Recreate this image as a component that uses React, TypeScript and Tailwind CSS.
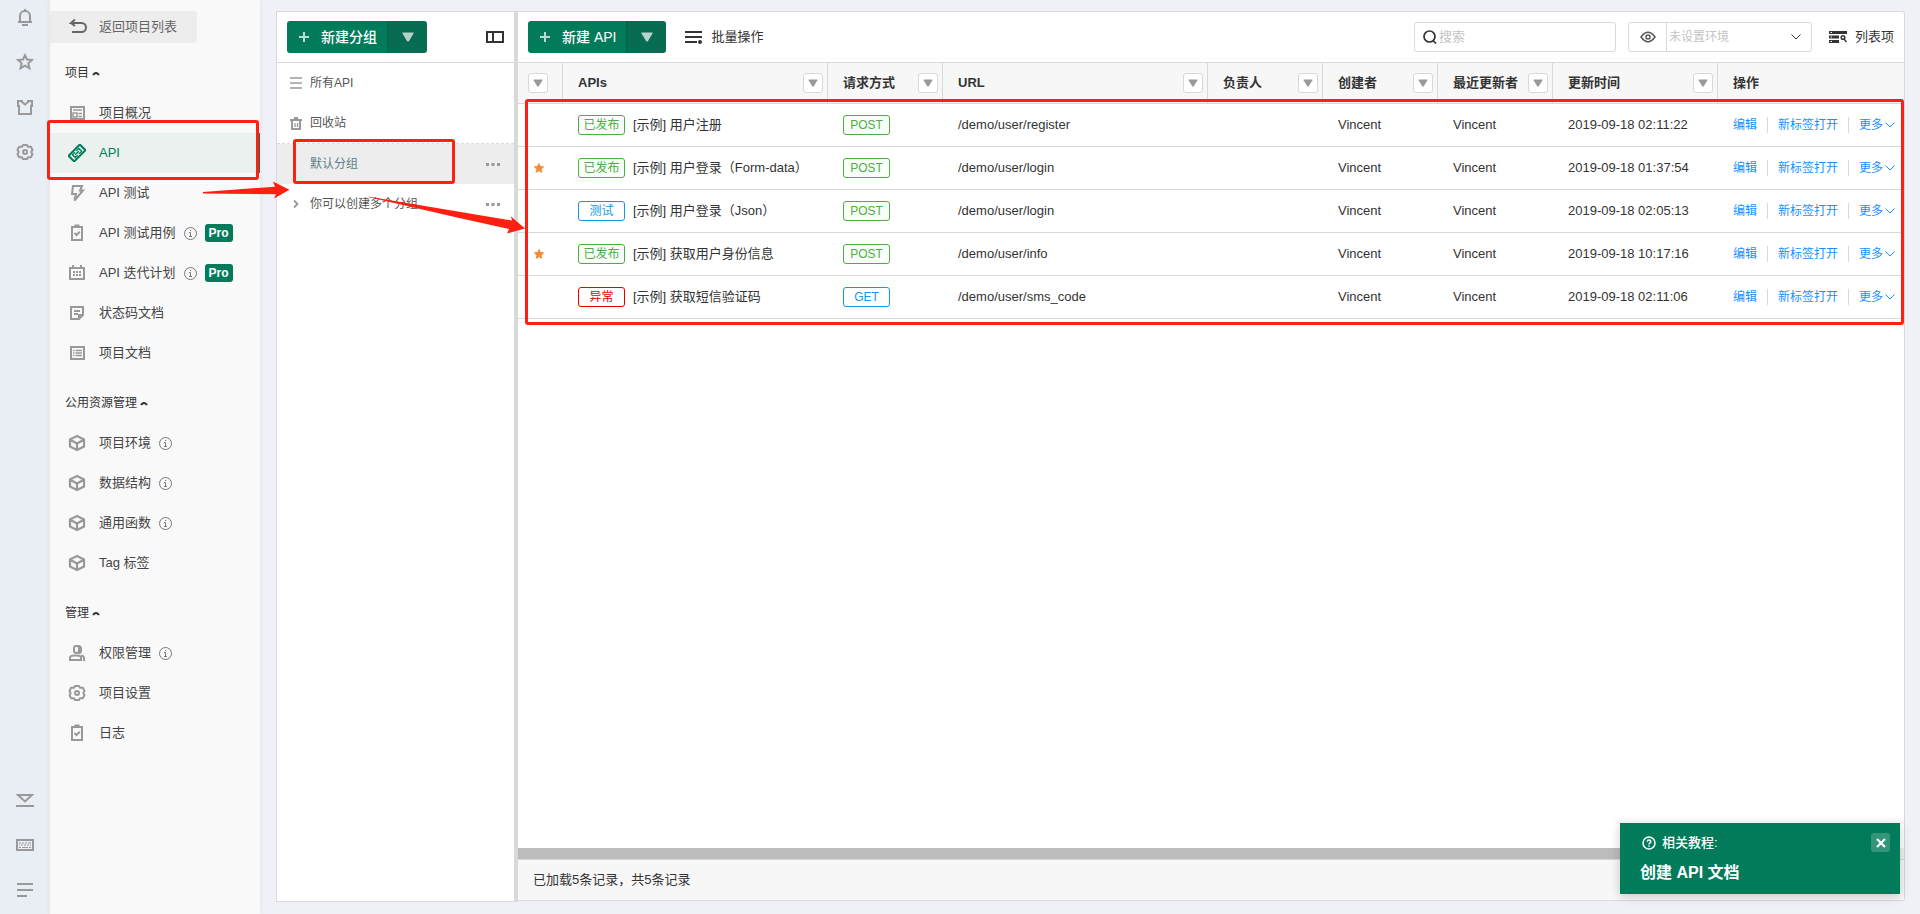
import type { ReactNode } from 'react'

type IconName =
  | 'bell' | 'star' | 'shirt' | 'gear' | 'collapse' | 'keyboard' | 'lines'
  | 'back' | 'overview' | 'api' | 'bolt' | 'clipboard' | 'calendar' | 'note'
  | 'doc' | 'cube' | 'user'

// 18x18 outline icons shared by the rail and the project menu
const ICONS: Record<IconName, ReactNode> = {
  bell: <path d="M4 14V8a5 5 0 0 1 10 0v6M2 14h14M6 17h6M9 1v2" />,
  star: <path d="M9 2.200l2 4.300 4.900.5-3.600 3.300 1.100 5L9 12.700l-4.400 2.600 1.100-5L2.100 7l4.900-.5z" />,
  shirt: <path d="M2 3h4v1l3 2.500L12 4V3h4v5h-1v8H3V8H2z" />,
  gear: (
    <>
      <path d="M7 2h4l1 1.800h3L16.500 7 15.300 9l1.200 2-1.500 3.200h-3L11 16H7l-1-1.800H3L1.500 11l1.200-2-1.200-2L3 3.800h3z" strokeLinejoin="round" />
      <circle cx="9" cy="9" r="2" />
    </>
  ),
  collapse: <path d="M2 4h14L9 10.500zM0 15h18" />,
  keyboard: (
    <>
      <path d="M1 4h16v10H1z" />
      <path d="M3 7h2m1 0h2m1 0h2m1 0h3M3 9h1m1 0h2m1 0h2m1 0h2m1 0h1M3 11.500h2m1 0h6m1 0h2" strokeWidth="1.200" />
    </>
  ),
  lines: <path d="M1 3h16M1 9h16M1 15h10" />,
  back: <path d="M6 1.500L2 5h10.500a4.200 4.200 0 0 1 0 9H3M2 5l4 3" />,
  overview: (
    <>
      <path d="M3 3h13v12H3z" />
      <path d="M5 6h9M5 9h4v4H5zM10.500 9.500H14M10.500 12.500H14" strokeWidth="1.500" />
    </>
  ),
  api: (
    <g transform="rotate(-45 9 9)">
      <path d="M1 5h16v8H1z" />
      <path d="M8 7H4.500v4H8M10 7h3.500v4H10M6.500 9h5" strokeWidth="1.400" />
    </g>
  ),
  bolt: <path d="M5 2h9l-2 4.500h3L6.500 16.500 8 10H4z" />,
  clipboard: (
    <>
      <path d="M4 3h10v13H4z" />
      <path d="M6.500 2h5" strokeWidth="3" />
      <path d="M6.500 9l2 2 3.300-3.300" />
    </>
  ),
  calendar: (
    <>
      <path d="M2 4h14v11H2zM5 1v2M13 1v2" />
      <path d="M5 8h2m1 0h2m1 0h2M5 11h2m1 0h2m1 0h2" />
    </>
  ),
  note: <path d="M3 3h12v8l-4 4H3zM6 7h6M6 10h4M15 11h-4v4" />,
  doc: (
    <>
      <path d="M3 3h13v12H3z" />
      <path d="M5 6.500h1.500M7.500 6.500H14M5 9h1.500M7.500 9H14M5 11.500h1.500M7.500 11.500H14" strokeWidth="1.400" />
    </>
  ),
  cube: <path d="M9 2l7 3.500v7L9 16l-7-3.500v-7zM2.500 6L9 9.500 15.500 6M9 9.500v6" strokeWidth="2.200" />,
  user: (
    <>
      <path d="M8 2h1a2 2 0 0 1 2 2v2.500a2.500 2.500 0 0 1-5 0V4a2 2 0 0 1 2-2zM10.500 2c3.500 0 3.500 7 0 7.500" />
      <path d="M2 16v-2.500C2 12 4 11.500 7.500 11.500S13 12 13 13.500V16zM13 11.500c2 .3 3 1 3 2.500v3" />
    </>
  ),
}

function Icon({ name }: { name: IconName }) {
  return (
    <svg viewBox="0 0 18 18" fill="none" stroke="currentColor" strokeWidth="2" className="size-[18px] shrink-0">
      {ICONS[name]}
    </svg>
  )
}

function InfoIcon() {
  return (
    <svg viewBox="0 0 13 13" fill="none" stroke="#777" className="size-[13px] shrink-0">
      <circle cx="6.500" cy="6.500" r="6" />
      <path d="M6 3.500h1.200M5 5.500h1.500v4M5 9.500h3" />
    </svg>
  )
}

function Triangle({ className }: { className: string }) {
  return (
    <svg viewBox="0 0 12 10" fill="currentColor" className={`shrink-0 ${className}`}>
      <path d="M1 .5h10q1 0 .5 1L7 9q-1 1-2 0L.5 1.500Q0 .5 1 .5z" />
    </svg>
  )
}

function Chevron({ className }: { className: string }) {
  return (
    <svg viewBox="0 0 10 10" fill="none" stroke="currentColor" className={`shrink-0 ${className}`}>
      <path d="M.5 2.500L5 7l4.500-4.500" />
    </svg>
  )
}

type MenuItem = { label: string; icon: IconName; info?: boolean; pro?: boolean; active?: boolean }

const MENU: { title: string; items: MenuItem[] }[] = [
  {
    title: '项目',
    items: [
      { label: '项目概况', icon: 'overview' },
      { label: 'API', icon: 'api', active: true },
      { label: 'API 测试', icon: 'bolt' },
      { label: 'API 测试用例', icon: 'clipboard', info: true, pro: true },
      { label: 'API 迭代计划', icon: 'calendar', info: true, pro: true },
      { label: '状态码文档', icon: 'note' },
      { label: '项目文档', icon: 'doc' },
    ],
  },
  {
    title: '公用资源管理',
    items: [
      { label: '项目环境', icon: 'cube', info: true },
      { label: '数据结构', icon: 'cube', info: true },
      { label: '通用函数', icon: 'cube', info: true },
      { label: 'Tag 标签', icon: 'cube' },
    ],
  },
  {
    title: '管理',
    items: [
      { label: '权限管理', icon: 'user', info: true },
      { label: '项目设置', icon: 'gear' },
      { label: '日志', icon: 'clipboard' },
    ],
  },
]

const COLUMNS = [
  { label: '', width: 'w-[45px]', filter: true },
  { label: 'APIs', width: 'w-[265px]', filter: true },
  { label: '请求方式', width: 'w-[115px]', filter: true },
  { label: 'URL', width: 'w-[265px]', filter: true },
  { label: '负责人', width: 'w-[115px]', filter: true },
  { label: '创建者', width: 'w-[115px]', filter: true },
  { label: '最近更新者', width: 'w-[115px]', filter: true },
  { label: '更新时间', width: 'w-[165px]', filter: true },
  { label: '操作', width: '', filter: false },
]

const ROWS = [
  { star: false, status: '已发布', name: '[示例] 用户注册', method: 'POST', url: '/demo/user/register', time: '2019-09-18 02:11:22' },
  { star: true, status: '已发布', name: '[示例] 用户登录（Form-data）', method: 'POST', url: '/demo/user/login', time: '2019-09-18 01:37:54' },
  { star: false, status: '测试', name: '[示例] 用户登录（Json）', method: 'POST', url: '/demo/user/login', time: '2019-09-18 02:05:13' },
  { star: true, status: '已发布', name: '[示例] 获取用户身份信息', method: 'POST', url: '/demo/user/info', time: '2019-09-18 10:17:16' },
  { star: false, status: '异常', name: '[示例] 获取短信验证码', method: 'GET', url: '/demo/user/sms_code', time: '2019-09-18 02:11:06' },
]

const BADGE_COLORS: Record<string, string> = {
  已发布: 'border-[#4ead45] text-[#4ead45] bg-[#f9fef8]',
  测试: 'border-[#1098ee] text-[#1098ee] bg-white',
  异常: 'border-[#e60000] text-[#e60000] bg-white',
  POST: 'border-[#4ead45] text-[#4ead45] bg-[#f9fef8]',
  GET: 'border-[#1098ee] text-[#1098ee] bg-white',
}

function Badge({ text }: { text: string }) {
  return (
    <span className={`flex h-5 w-[47px] shrink-0 items-center justify-center rounded-[3px] border text-xs leading-none ${BADGE_COLORS[text]}`}>
      {text}
    </span>
  )
}

function SplitButton({ label, menuLabel }: { label: string; menuLabel: string }) {
  return (
    <div className="flex h-8 overflow-hidden rounded-[3px] text-white">
      <button type="button" className="flex items-center gap-3 bg-[#027b5b] pr-2.5 pl-3 text-sm font-medium">
        <svg viewBox="0 0 10 10" stroke="#b9dbd1" strokeWidth="2" className="size-2.5">
          <path d="M5 0v10M0 5h10" />
        </svg>
        {label}
      </button>
      <button type="button" aria-label={menuLabel} className="flex w-10 items-center justify-center border-l border-[#04644b] bg-[#076c52]">
        <Triangle className="h-2.5 w-3 text-[#b5d3cb]" />
      </button>
    </div>
  )
}

function Rail() {
  const top: [IconName, string][] = [['bell', '通知'], ['star', '收藏'], ['shirt', '主题'], ['gear', '设置']]
  const bottom: [IconName, string][] = [['collapse', '收起'], ['keyboard', '快捷键'], ['lines', '菜单']]
  return (
    <aside className="flex w-[50px] shrink-0 flex-col items-center justify-between bg-[#e8eef3] pt-2 pb-[15px] text-[#999]">
      {[top, bottom].map((group, i) => (
        <div key={i} className="flex flex-col gap-[27px]">
          {group.map(([name, label]) => (
            <button key={name} type="button" aria-label={label}>
              <Icon name={name} />
            </button>
          ))}
        </div>
      ))}
    </aside>
  )
}

function Sidebar() {
  return (
    <nav className="w-[210px] shrink-0 bg-[#f9f9f9] pt-[11px] text-[13px] shadow-[0_0_6px_rgba(0,0,0,0.06)]">
      <a href="#" className="mb-2.5 flex h-8 w-[147px] items-center gap-3 rounded-r-[3px] bg-[#ededed] pl-[19px] text-[#666]">
        <Icon name="back" />
        返回项目列表
      </a>
      {MENU.map((section) => (
        <section key={section.title} className="mb-2.5">
          <button type="button" className="flex h-10 items-center gap-[3px] pl-[15px] text-xs text-[#333]">
            {section.title}
            <svg viewBox="0 0 8 6" fill="none" stroke="currentColor" strokeWidth="2" className="h-1.5 w-2">
              <path d="M1 5q3-4 6 0" />
            </svg>
          </button>
          <ul>
            {section.items.map((item) => (
              <li key={item.label} className="relative">
                <a
                  href="#"
                  className={`flex h-10 items-center gap-2 pl-[18px] ${
                    item.active ? 'border-r-2 border-[#027b5b] bg-[#ebf1ee] text-[#027b5b]' : 'text-[#444]'
                  }`}
                >
                  <span className={`mr-[5px] ${item.active ? 'text-[#027b5b]' : 'text-[#999]'}`}>
                    <Icon name={item.icon} />
                  </span>
                  {item.label}
                  {item.info && <InfoIcon />}
                  {item.pro && (
                    <span className="flex h-[18px] w-7 items-center justify-center rounded-[3px] bg-[#027b5b] text-xs font-bold text-white">
                      Pro
                    </span>
                  )}
                </a>
                {item.active && <Marker className="-top-[13px] right-px -bottom-[7px] -left-[3px]" />}
              </li>
            ))}
          </ul>
        </section>
      ))}
    </nav>
  )
}

// Red outline laid over a highlighted area
function Marker({ className }: { className: string }) {
  return <div className={`pointer-events-none absolute z-10 rounded-[3px] border-3 border-[#ff2012] ${className}`} />
}

function GroupPanel() {
  return (
    <section className="w-[242px] shrink-0 border border-r-4 border-[#d9d9d9] bg-white text-xs text-[#555]">
      <header className="flex h-[51px] items-center justify-between border-b border-[#d9d9d9] px-2.5">
        <SplitButton label="新建分组" menuLabel="更多分组操作" />
        <button type="button" aria-label="收起分组">
          <svg viewBox="0 0 18 12" fill="none" stroke="#333" strokeWidth="2" className="h-3 w-[18px]">
            <path d="M1 1h16v10H1zM7 1v10" />
          </svg>
        </button>
      </header>
      <ul>
        <li className="flex h-10 items-center gap-2 pl-[13px]">
          <svg viewBox="0 0 12 12" stroke="#999" strokeWidth="1.300" className="size-3">
            <path d="M0 1h12M0 6h12M0 11h12" />
          </svg>
          所有API
        </li>
        <li className="flex h-[41px] items-center gap-2 border-b border-dashed border-[#d9d9d9] pl-[13px]">
          <svg viewBox="0 0 12 13" fill="none" stroke="#999" strokeWidth="2" className="h-[13px] w-3">
            <path d="M0 3h12M4 1h4M2 4v8h8V4" />
            <path d="M5 6v4M7.500 6v4" strokeWidth="1.300" />
          </svg>
          回收站
        </li>
        <li className="relative flex h-10 items-center justify-between bg-[#ededed] pr-3.5 pl-[33px] text-[#607d8b]">
          默认分组
          <Dots />
          <Marker className="-top-[5px] right-[59px] bottom-0 left-4" />
        </li>
        <li className="flex h-10 items-center gap-2 pr-3.5 pl-[13px]">
          <svg viewBox="0 0 12 12" fill="none" stroke="#999" strokeWidth="1.800" className="size-3">
            <path d="M4 2.500L7.500 6 4 9.500" />
          </svg>
          <span className="grow">你可以创建多个分组</span>
          <Dots />
        </li>
      </ul>
    </section>
  )
}

function Dots() {
  return (
    <button type="button" aria-label="更多">
      <svg viewBox="0 0 14 3" fill="#999" className="h-[3px] w-3.5">
        <path d="M0 0h3v3H0zM5.500 0h3v3h-3zM11 0h3v3h-3z" />
      </svg>
    </button>
  )
}

function Toolbar() {
  return (
    <header className="flex h-[51px] shrink-0 items-center border-b border-[#d9d9d9] px-2.5 text-[13px] text-[#333]">
      <SplitButton label="新建 API" menuLabel="更多新建方式" />
      <button type="button" className="ml-[19px] flex items-center gap-2">
        <svg viewBox="0 0 18 14" stroke="#333" strokeWidth="2" className="h-3.5 w-[18px]">
          <path d="M0 2h17M0 7h17M0 12h12" />
          <circle cx="15" cy="12" r="1" />
        </svg>
        批量操作
      </button>
      <label className="mr-3 ml-auto flex h-[30px] w-[202px] items-center gap-0.5 rounded-[3px] border border-[#d9d9d9] pl-2">
        <svg viewBox="0 0 14 14" fill="none" stroke="#333" strokeWidth="1.700" className="size-3.5 shrink-0">
          <circle cx="6.500" cy="6.500" r="5.500" />
          <path d="M10 10.500L13 13.500" />
        </svg>
        <input type="text" placeholder="搜索" aria-label="搜索" className="w-full outline-none placeholder:text-[#c4c4c4]" />
      </label>
      <div className="relative mr-[17px] flex h-[30px] w-[184px] items-center rounded-[3px] border border-[#d9d9d9]">
        <button type="button" aria-label="查看环境" className="flex h-full w-[38px] items-center justify-end border-r border-[#d9d9d9] pr-2.5">
          <svg viewBox="0 0 16 12" fill="none" stroke="#555" strokeWidth="1.500" className="h-3 w-4">
            <path d="M1 6q7-9.500 14 0-7 9.500-14 0z" />
            <circle cx="8" cy="6" r="2" />
          </svg>
        </button>
        <select aria-label="环境" className="h-full grow appearance-none pl-0.5 text-xs text-[#c4c4c4] outline-none">
          <option>未设置环境</option>
        </select>
        <Chevron className="pointer-events-none absolute right-2.5 size-2.5 text-[#333]" />
      </div>
      <button type="button" className="flex items-center gap-2">
        <svg viewBox="0 0 18 12" fill="none" stroke="#333" className="h-3 w-[18px]">
          <path d="M0 1.500h18M0 6h10M0 10.500h10" strokeWidth="3" />
          <path d="M1.500 1.500h1.500M1.500 6h1.500M1.500 10.500h1.500" stroke="#fff" />
          <circle cx="14" cy="6.500" r="1.800" strokeWidth="1.500" />
          <path d="M15 8l2.500 3" strokeWidth="1.500" />
        </svg>
        列表项
      </button>
    </header>
  )
}

function ApiTable() {
  return (
    <div className="relative">
      <table className="w-full table-fixed border-separate border-spacing-0 text-left text-[13px] text-[#333]">
        <thead>
          <tr>
            {COLUMNS.map((col, i) => (
              <th
                key={i}
                className={`h-[41px] border-b border-[#d9d9d9] bg-[#f7f7f7] p-0 font-bold whitespace-nowrap ${col.width} ${
                  i < COLUMNS.length - 1 ? 'border-r' : ''
                }`}
              >
                <div className={`flex items-center justify-between ${i === 0 ? 'pl-2.5' : 'pr-1 pl-[15px]'}`}>
                  {col.label}
                  {col.filter && (
                    <button
                      type="button"
                      aria-label="筛选"
                      className="flex size-5 items-center justify-center rounded-[3px] border border-[#d9d9d9] bg-white"
                    >
                      <Triangle className="h-2 w-2.5 text-[#999]" />
                    </button>
                  )}
                </div>
              </th>
            ))}
          </tr>
        </thead>
        <tbody>
          {ROWS.map((row) => (
            <tr key={row.name} className="[&>td]:h-[43px] [&>td]:border-b [&>td]:border-[#d9d9d9] [&>td]:p-0 [&>td]:pl-[15px] [&>td]:whitespace-nowrap">
              <td>
                {row.star && (
                  <svg viewBox="0 0 12 12" fill="#f98a34" className="size-3">
                    <path d="M6 .5l1.600 3.600 3.900.4-2.900 2.700.8 3.900L6 9.200l-3.400 1.900.8-3.900L.5 4.500l3.900-.4z" />
                  </svg>
                )}
              </td>
              <td>
                <div className="flex items-center gap-2">
                  <Badge text={row.status} />
                  {row.name}
                </div>
              </td>
              <td><Badge text={row.method} /></td>
              <td>{row.url}</td>
              <td></td>
              <td>Vincent</td>
              <td>Vincent</td>
              <td>{row.time}</td>
              <td>
                <div className="flex items-center text-xs text-[#1890ff]">
                  <a href="#">编辑</a>
                  <span className="mx-2.5 h-4 w-px bg-[#d9d9d9]" />
                  <a href="#">新标签打开</a>
                  <span className="mx-2.5 h-4 w-px bg-[#d9d9d9]" />
                  <button type="button" className="flex items-center gap-0.5">
                    更多
                    <Chevron className="size-2.5" />
                  </button>
                </div>
              </td>
            </tr>
          ))}
        </tbody>
      </table>
      <Marker className="top-9 right-0 -bottom-1.5 left-[7px]" />
    </div>
  )
}

function TutorialToast() {
  return (
    <div className="absolute right-5 bottom-5 z-20 flex h-[71px] w-[280px] flex-col bg-[#027b5b] pt-2.5 pl-5 text-white shadow-[0_2px_10px_rgba(0,0,0,0.2)]">
      <div className="flex items-center gap-1.5 pr-2.5 pl-0.5 text-[13px] font-medium">
        <svg viewBox="0 0 14 14" fill="none" stroke="currentColor" strokeWidth="1.500" className="size-3.5">
          <circle cx="7" cy="7" r="6" />
          <path d="M5.300 5.700c0-2.200 3.500-2.200 3.500 0C8.800 7 7 6.900 7 8.400M7 9.500v1.200" />
        </svg>
        <span className="grow">相关教程:</span>
        <button type="button" aria-label="关闭" className="flex size-[19px] items-center justify-center rounded-[3px] bg-white/20">
          <svg viewBox="0 0 10 10" stroke="currentColor" strokeWidth="2.200" className="size-2.5">
            <path d="M1 1l8 8M9 1L1 9" />
          </svg>
        </button>
      </div>
      <a href="#" className="mt-2 text-base leading-6 font-bold">创建 API 文档</a>
    </div>
  )
}

export default function App() {
  return (
    <div className="relative flex h-screen overflow-hidden bg-[#eff1f6] font-['Liberation_Sans','Noto_Sans_CJK_SC',sans-serif]">
      <Rail />
      <Sidebar />
      <main className="flex min-w-0 grow pt-[11px] pr-[15px] pb-3 pl-4">
        <GroupPanel />
        <section className="mb-px flex min-w-0 grow flex-col rounded-r-[3px] border border-l-0 border-[#d9d9d9] bg-white">
          <Toolbar />
          <div className="grow">
            <ApiTable />
          </div>
          <div className="h-[11px] bg-[#f1f1f1]">
            <div className="h-full w-11/12 bg-[#bcbcbc]" />
          </div>
          <footer className="flex h-[41px] shrink-0 items-center border-t border-[#d9d9d9] bg-[#f7f7f7] pl-[15px] text-[13px] text-[#333]">
            已加载5条记录，共5条记录
          </footer>
        </section>
      </main>
      <TutorialToast />

      {/* Arrows from menu to group to list */}
      <svg viewBox="0 0 330 60" fill="#ff2012" className="pointer-events-none absolute top-[178px] left-[200px] z-10 h-[60px] w-[330px]">
        <path d="M3 14L75 8.700 73 3.500l16.500 8.300L74 20.500l2-4.200L3 15.500z" />
        <path d="M168 19q1-.5 3 0L312 42.500l-1-4 14 12-18 5 2-4.500-52-11.500z" />
      </svg>
    </div>
  )
}
